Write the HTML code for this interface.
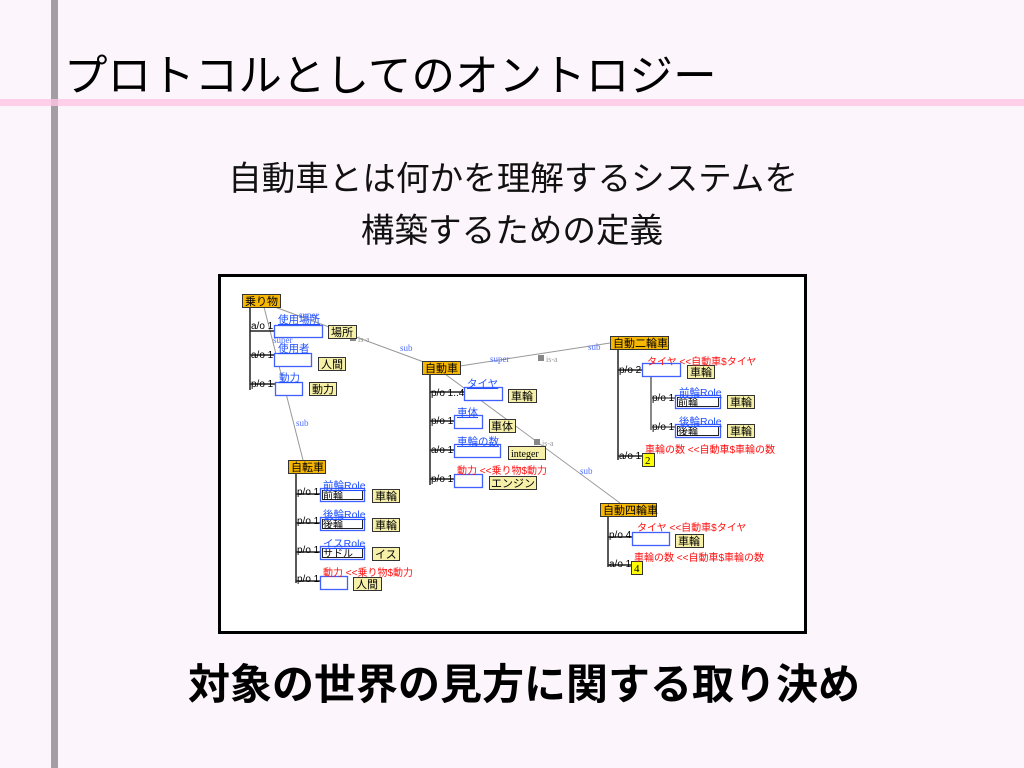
<!DOCTYPE html>
<html><head><meta charset="utf-8"><style>
body{margin:0;width:1024px;height:768px;background:#fcf5fb;position:relative;overflow:hidden;font-family:"Liberation Sans","Noto Sans CJK JP",sans-serif}
.t{position:absolute;white-space:nowrap;color:#000}
</style></head><body>
<div style="position:absolute;left:51px;top:0;width:7px;height:768px;background:#a29ea2"></div>
<div style="position:absolute;left:0;top:99px;width:1024px;height:7px;background:rgba(255,196,228,0.8)"></div>
<div class="t" style="left:64px;top:49px;font-size:43.5px;line-height:56px;letter-spacing:0.1px">プロトコルとしてのオントロジー</div>
<div class="t" style="left:0;width:1026px;text-align:center;top:158px;font-size:33.6px;line-height:44px;color:#111">自動車とは何かを理解するシステムを</div>
<div class="t" style="left:0;width:1024px;text-align:center;top:210px;font-size:33.6px;line-height:44px;color:#111">構築するための定義</div>
<div class="t" style="left:0;width:1048px;text-align:center;top:659px;font-size:42px;line-height:52px;font-weight:bold">対象の世界の見方に関する取り決め</div>
<svg style="position:absolute;left:0;top:0" width="1024" height="768" viewBox="0 0 1024 768" font-family="Liberation Serif,Noto Sans CJK JP,serif" font-size="10">
<rect x="219.5" y="275.5" width="586" height="357" fill="#fff" stroke="#000" stroke-width="3"/>
<g stroke="#999" stroke-width="1" fill="none">
<line x1="264" y1="303" x2="440" y2="368"/>
<line x1="264" y1="307" x2="303" y2="460"/>
<line x1="460" y1="366" x2="610" y2="343"/>
<line x1="445" y1="374" x2="620" y2="503"/>
</g>
<g fill="#888"><rect x="350" y="335" width="6" height="6"/><rect x="538" y="355" width="6" height="6"/><rect x="534" y="439" width="6" height="6"/></g>
<g fill="#5070ff" font-size="9"><text x="400" y="351">sub</text><text x="490" y="362">super</text><text x="588" y="350">sub</text><text x="296" y="426">sub</text><text x="580" y="474">sub</text><text x="299" y="318">super</text><text x="273" y="343">super</text></g>
<g fill="#999" font-size="8"><text x="358" y="342">is-a</text><text x="546" y="362">is-a</text><text x="542" y="446">is-a</text></g>
<g stroke="#222" stroke-width="1.5" fill="none">
<path d="M250 307V390M250 331H274M250 355H274M250 384H275"/>
<path d="M430 374V485M430 392H464M430 421H454M430 450H454M430 479H454"/>
<path d="M296 473V583M296 494H320M296 523H320M296 552H320M296 581H320"/>
<path d="M618 349V460M618 370H642M618 456H642"/>
<path d="M608 516V567M608 537H632M608 565H631"/>
</g>
<path d="M651 376V430M651 398H675M651 427H675" stroke="#888" stroke-width="2" fill="none"/>
<g fill="#f8b800" stroke="#333">
<rect x="242.5" y="294.5" width="38" height="13"/><rect x="422.5" y="361.5" width="38" height="13"/>
<rect x="288.5" y="460.5" width="37" height="13"/><rect x="610.5" y="336.5" width="58" height="13"/>
<rect x="600.5" y="503.5" width="56" height="13"/>
</g>
<g font-size="11" fill="#000"><text x="245" y="305">乗り物</text><text x="425" y="372">自動車</text><text x="291" y="471">自転車</text><text x="613" y="347">自動二輪車</text><text x="603" y="514">自動四輪車</text></g>
<g fill="#fff" stroke="#4060ff" stroke-width="1.3">
<rect x="274.5" y="325.5" width="48" height="12"/><rect x="274.5" y="353.5" width="37" height="13"/><rect x="275.5" y="382.5" width="27" height="13"/>
<rect x="464.5" y="387.5" width="38" height="13"/><rect x="454.5" y="415.5" width="28" height="13"/><rect x="454.5" y="444.5" width="46" height="13"/><rect x="454.5" y="474.5" width="28" height="13"/>
<rect x="320.5" y="488.5" width="44" height="13"/><rect x="320.5" y="517.5" width="44" height="13"/><rect x="320.5" y="546.5" width="44" height="13"/><rect x="320.5" y="576.5" width="27" height="13"/>
<rect x="642.5" y="363.5" width="38" height="13"/><rect x="675.5" y="395.5" width="45" height="13"/><rect x="675.5" y="424.5" width="45" height="13"/>
<rect x="632.5" y="532.5" width="37" height="13"/>
</g>
<g fill="#fff" stroke="#222" stroke-width="1">
<rect x="322.5" y="490.5" width="40" height="9"/><rect x="322.5" y="519.5" width="40" height="9"/><rect x="322.5" y="548.5" width="40" height="9"/>
<rect x="677.5" y="397.5" width="41" height="9"/><rect x="677.5" y="426.5" width="41" height="9"/>
</g>
<g font-size="10" fill="#000"><text x="323" y="499">前輪</text><text x="323" y="528">後輪</text><text x="323" y="557">サドル</text><text x="678" y="406">前輪</text><text x="678" y="435">後輪</text></g>
<g fill="#f6f0a8" stroke="#333">
<rect x="328.5" y="325.5" width="28" height="13"/><rect x="318.5" y="357.5" width="27" height="13"/><rect x="309.5" y="382.5" width="27" height="13"/>
<rect x="508.5" y="389.5" width="28" height="13"/><rect x="489.5" y="419.5" width="26" height="13"/><rect x="508.5" y="446.5" width="37" height="13"/><rect x="489.5" y="476.5" width="47" height="13"/>
<rect x="372.5" y="489.5" width="27" height="13"/><rect x="372.5" y="518.5" width="27" height="13"/><rect x="372.5" y="547.5" width="27" height="13"/><rect x="353.5" y="577.5" width="28" height="13"/>
<rect x="687.5" y="365.5" width="27" height="13"/><rect x="727.5" y="395.5" width="27" height="13"/><rect x="727.5" y="424.5" width="27" height="13"/><rect x="675.5" y="534.5" width="28" height="13"/>
</g>
<g fill="#ffff00" stroke="#333"><rect x="642.5" y="453.5" width="12" height="13"/><rect x="631.5" y="561.5" width="11" height="13"/></g>
<g font-size="11" fill="#000">
<text x="331" y="336">場所</text><text x="321" y="368">人間</text><text x="312" y="393">動力</text>
<text x="511" y="400">車輪</text><text x="491" y="430">車体</text><text x="511" y="457" font-size="10">integer</text><text x="491" y="487">エンジン</text>
<text x="375" y="500">車輪</text><text x="375" y="529">車輪</text><text x="375" y="558">イス</text><text x="356" y="588">人間</text>
<text x="690" y="376">車輪</text><text x="730" y="406">車輪</text><text x="730" y="435">車輪</text><text x="678" y="545">車輪</text>
<text x="645" y="464">2</text><text x="634" y="572">4</text>
</g>
<g font-size="10" fill="#000" font-family="Liberation Sans,sans-serif">
<text x="251" y="329">a/o 1</text><text x="251" y="358">a/o 1</text><text x="251" y="387">p/o 1</text>
<text x="431" y="396">p/o 1..4</text><text x="431" y="424">p/o 1</text><text x="431" y="453">a/o 1</text><text x="431" y="482">p/o 1</text>
<text x="297" y="495">p/o 1</text><text x="297" y="524">p/o 1</text><text x="297" y="553">p/o 1</text><text x="297" y="582">p/o 1</text>
<text x="619" y="373">p/o 2</text><text x="652" y="401">p/o 1</text><text x="652" y="430">p/o 1</text><text x="619" y="459">a/o 1</text>
<text x="609" y="538">p/o 4</text><text x="609" y="567">a/o 1</text>
</g>
<g font-size="10.5" fill="#2050ff" text-decoration="underline" font-family="Liberation Sans,Noto Sans CJK JP,sans-serif">
<text x="278" y="323">使用場所</text><text x="278" y="352">使用者</text><text x="279" y="381">動力</text>
<text x="467" y="387">タイヤ</text><text x="457" y="416">車体</text><text x="457" y="445">車輪の数</text>
<text x="323" y="489">前輪Role</text><text x="323" y="518">後輪Role</text><text x="323" y="547">イスRole</text>
<text x="679" y="396">前輪Role</text><text x="679" y="425">後輪Role</text>
</g>
<g font-size="10" fill="#ff1010" font-family="Liberation Sans,Noto Sans CJK JP,sans-serif">
<text x="457" y="474">動力 &lt;&lt;乗り物$動力</text><text x="323" y="576">動力 &lt;&lt;乗り物$動力</text>
<text x="647" y="365">タイヤ &lt;&lt;自動車$タイヤ</text><text x="645" y="453">車輪の数 &lt;&lt;自動車$車輪の数</text>
<text x="637" y="531">タイヤ &lt;&lt;自動車$タイヤ</text><text x="634" y="561">車輪の数 &lt;&lt;自動車$車輪の数</text>
</g>
</svg>
</body></html>
